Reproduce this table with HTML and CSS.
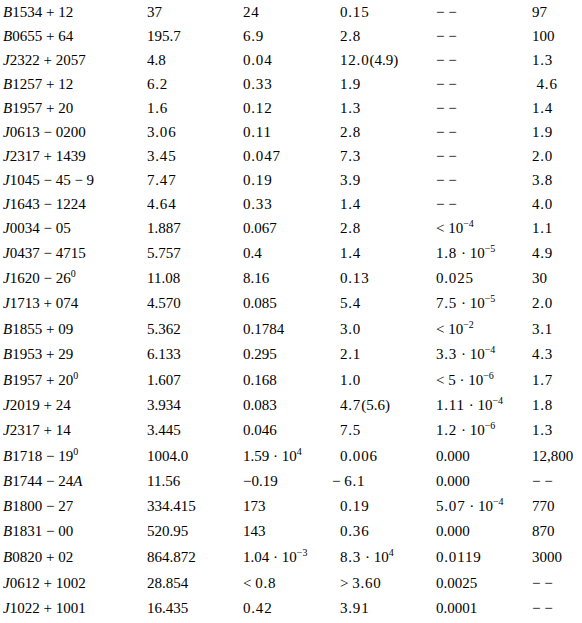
FILE: index.html
```html
<!DOCTYPE html>
<html>
<head>
<meta charset="utf-8">
<link rel="stylesheet" href="styles.css">
</head>
<body>
<table class="data">
<colgroup><col class="c1"><col class="c2"><col class="c3"><col class="c4"><col class="c5"><col class="c6"></colgroup>
<tbody>
<tr class="r24"><td><i>B</i>1534 + 12</td><td>37</td><td class="sp">24</td><td class="sp">0.15</td><td class="dash">− −</td><td>97</td></tr>
<tr class="r24"><td><i>B</i>0655 + 64</td><td>195.7</td><td class="sp">6.9</td><td class="sp">2.8</td><td class="dash">− −</td><td>100</td></tr>
<tr class="r24"><td><i>J</i>2322 + 2057</td><td>4.8</td><td class="sp">0.04</td><td><span class="sp">12.0</span>(4.9)</td><td class="dash">− −</td><td class="sp">1.3</td></tr>
<tr class="r24"><td><i>B</i>1257 + 12</td><td class="sp">6.2</td><td class="sp">0.33</td><td class="sp">1.9</td><td class="dash">− −</td><td class="sp">&nbsp;4.6</td></tr>
<tr class="r24"><td><i>B</i>1957 + 20</td><td class="sp">1.6</td><td class="sp">0.12</td><td class="sp">1.3</td><td class="dash">− −</td><td class="sp">1.4</td></tr>
<tr class="r24"><td><i>J</i>0613 − 0200</td><td class="sp">3.06</td><td class="sp">0.11</td><td class="sp">2.8</td><td class="dash">− −</td><td class="sp">1.9</td></tr>
<tr class="r24"><td><i>J</i>2317 + 1439</td><td class="sp">3.45</td><td class="sp">0.047</td><td class="sp">7.3</td><td class="dash">− −</td><td class="sp">2.0</td></tr>
<tr class="r24"><td><i>J</i>1045 − 45 − 9</td><td class="sp">7.47</td><td class="sp">0.19</td><td class="sp">3.9</td><td class="dash">− −</td><td class="sp">3.8</td></tr>
<tr class="r24"><td><i>J</i>1643 − 1224</td><td class="sp">4.64</td><td class="sp">0.33</td><td class="sp">1.4</td><td class="dash">− −</td><td class="sp">4.0</td></tr>
<tr class="r25"><td><i>J</i>0034 − 05</td><td>1.887</td><td>0.067</td><td class="sp">2.8</td><td>&lt; 10<sup class="e">−4</sup></td><td class="sp">1.1</td></tr>
<tr class="r25"><td><i>J</i>0437 − 4715</td><td>5.757</td><td>0.4</td><td class="sp">1.4</td><td><span class="sp">1.8</span> · 10<sup class="e">−5</sup></td><td class="sp">4.9</td></tr>
<tr class="r25"><td><i>J</i>1620 − 26<sup class="e">0</sup></td><td>11.08</td><td>8.16</td><td class="sp">0.13</td><td class="sp">0.025</td><td>30</td></tr>
<tr class="r25"><td><i>J</i>1713 + 074</td><td>4.570</td><td>0.085</td><td class="sp">5.4</td><td><span class="sp">7.5</span> · 10<sup class="e">−5</sup></td><td class="sp">2.0</td></tr>
<tr class="r26"><td><i>B</i>1855 + 09</td><td>5.362</td><td>0.1784</td><td class="sp">3.0</td><td>&lt; 10<sup class="e">−2</sup></td><td class="sp">3.1</td></tr>
<tr class="r25"><td><i>B</i>1953 + 29</td><td>6.133</td><td>0.295</td><td class="sp">2.1</td><td><span class="sp">3.3</span> · 10<sup class="e">−4</sup></td><td class="sp">4.3</td></tr>
<tr class="r26"><td><i>B</i>1957 + 20<sup class="e">0</sup></td><td>1.607</td><td>0.168</td><td class="sp">1.0</td><td>&lt; 5 · 10<sup class="e">−6</sup></td><td class="sp">1.7</td></tr>
<tr class="r25"><td><i>J</i>2019 + 24</td><td>3.934</td><td>0.083</td><td><span class="sp">4.7</span>(5.6)</td><td><span class="sp">1.11</span> · 10<sup class="e">−4</sup></td><td class="sp">1.8</td></tr>
<tr class="r25"><td><i>J</i>2317 + 14</td><td>3.445</td><td>0.046</td><td class="sp">7.5</td><td><span class="sp">1.2</span> · 10<sup class="e">−6</sup></td><td class="sp">1.3</td></tr>
<tr class="r26"><td><i>B</i>1718 − 19<sup class="e">0</sup></td><td>1004.0</td><td>1.59 · 10<sup class="e">4</sup></td><td class="sp">0.006</td><td>0.000</td><td>12,800</td></tr>
<tr class="r25"><td><i>B</i>1744 − 24<i>A</i></td><td>11.56</td><td>−0.19</td><td><span class="out">− <span class="sp">6.1</span></span></td><td>0.000</td><td class="dash">− −</td></tr>
<tr class="r25"><td><i>B</i>1800 − 27</td><td>334.415</td><td>173</td><td class="sp">0.19</td><td><span class="sp">5.07</span> · 10<sup class="e">−4</sup></td><td>770</td></tr>
<tr class="r25"><td><i>B</i>1831 − 00</td><td>520.95</td><td>143</td><td class="sp">0.36</td><td>0.000</td><td>870</td></tr>
<tr class="r26"><td><i>B</i>0820 + 02</td><td>864.872</td><td>1.04 · 10<sup class="e">−3</sup></td><td><span class="sp">8.3</span> · 10<sup class="e">4</sup></td><td class="sp">0.0119</td><td>3000</td></tr>
<tr class="r26"><td><i>J</i>0612 + 1002</td><td>28.854</td><td>&lt; <span class="sp">0.8</span></td><td>&gt; <span class="sp">3.60</span></td><td>0.0025</td><td class="dash">− −</td></tr>
<tr class="r24"><td><i>J</i>1022 + 1001</td><td>16.435</td><td class="sp">0.42</td><td class="sp">3.91</td><td>0.0001</td><td class="dash">− −</td></tr>
</tbody>
</table>
</body>
</html>
```

FILE: styles.css
```css
html, body {
  margin: 0;
  padding: 0;
  background: #ffffff;
}

body {
  font-family: "Liberation Serif", "Times New Roman", serif;
  font-size: 15px;
  color: #000000;
}

.data {
  border-collapse: collapse;
  border-spacing: 0;
  table-layout: fixed;
  width: 582px;
}

.c1 { width: 147px; }
.c2 { width: 96px; }
.c3 { width: 97px; }
.c4 { width: 96px; }
.c5 { width: 96px; }
.c6 { width: 50px; }

.data td {
  padding: 0;
  line-height: 17px;
  vertical-align: middle;
  white-space: nowrap;
  text-align: left;
}

.data td:first-child {
  padding-left: 3px;
}

.r24 { height: 24px; }
.r25 { height: 25px; }
.r26 { height: 26px; }

.sp {
  letter-spacing: 0.8px;
}

.dash {
  letter-spacing: 0;
}

.e {
  font-size: 10px;
  line-height: 0;
  vertical-align: 6px;
  letter-spacing: 0;
}

.out {
  margin-left: -8px;
}
```
